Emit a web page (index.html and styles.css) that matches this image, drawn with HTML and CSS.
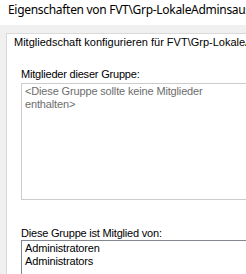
FILE: index.html
```
<!DOCTYPE html>
<html lang="de">
<head>
    <meta charset="UTF-8">
    <title>Eigenschaften</title>
    <link rel="stylesheet" href="styles.css">
</head>
<body>
    <div class="dialog">
        <div class="titlebar">Eigenschaften von FVT\Grp-LokaleAdminsausnahmen</div>
        <div class="tabpage">
            <div class="heading">Mitgliedschaft konfigurieren für FVT\Grp-LokaleAdminsausnahmen</div>
            <div class="label first">Mitglieder dieser Gruppe:</div>
            <div class="listbox disabled">
                <div class="item">&lt;Diese Gruppe sollte keine Mitglieder<br>enthalten&gt;</div>
            </div>
            <div class="label second">Diese Gruppe ist Mitglied von:</div>
            <div class="listbox">
                <div class="item">Administratoren</div>
                <div class="item">Administrators</div>
            </div>
        </div>
    </div>
</body>
</html>
```

FILE: styles.css
```
* {
    margin: 0;
    padding: 0;
    box-sizing: border-box;
}

body {
    width: 246px;
    height: 274px;
    overflow: hidden;
    background: #f0f0f0;
    font-family: "Liberation Sans", Arial, sans-serif;
    font-size: 11px;
    color: #000;
}

.dialog {
    width: 420px;
}

.titlebar {
    height: 25px;
    background: #fff;
    padding-left: 8px;
    font-family: "Noto Sans", "Open Sans", sans-serif;
    font-size: 12px;
    letter-spacing: -0.3px;
    line-height: 20px;
    white-space: nowrap;
}

.tabpage {
    margin: 8px 0 0 6px;
    height: 250px;
    background: #fff;
    border: 1px solid #d9d9d9;
    padding: 2px 0 0 7px;
}

.heading {
    line-height: 13px;
    white-space: nowrap;
}

.label {
    margin-left: 7px;
    line-height: 13px;
    letter-spacing: -0.2px;
    white-space: nowrap;
}

.label.first {
    margin-top: 19px;
}

.label.second {
    margin-top: 27px;
}

.listbox {
    margin-left: 7px;
    height: 80px;
    border: 1px solid #828790;
    padding: 1px 3px;
    line-height: 13px;
    letter-spacing: -0.15px;
}

.listbox.disabled {
    margin-top: 2px;
    height: 117px;
    border-color: #cccccc;
    color: #6d6d6d;
}
```
